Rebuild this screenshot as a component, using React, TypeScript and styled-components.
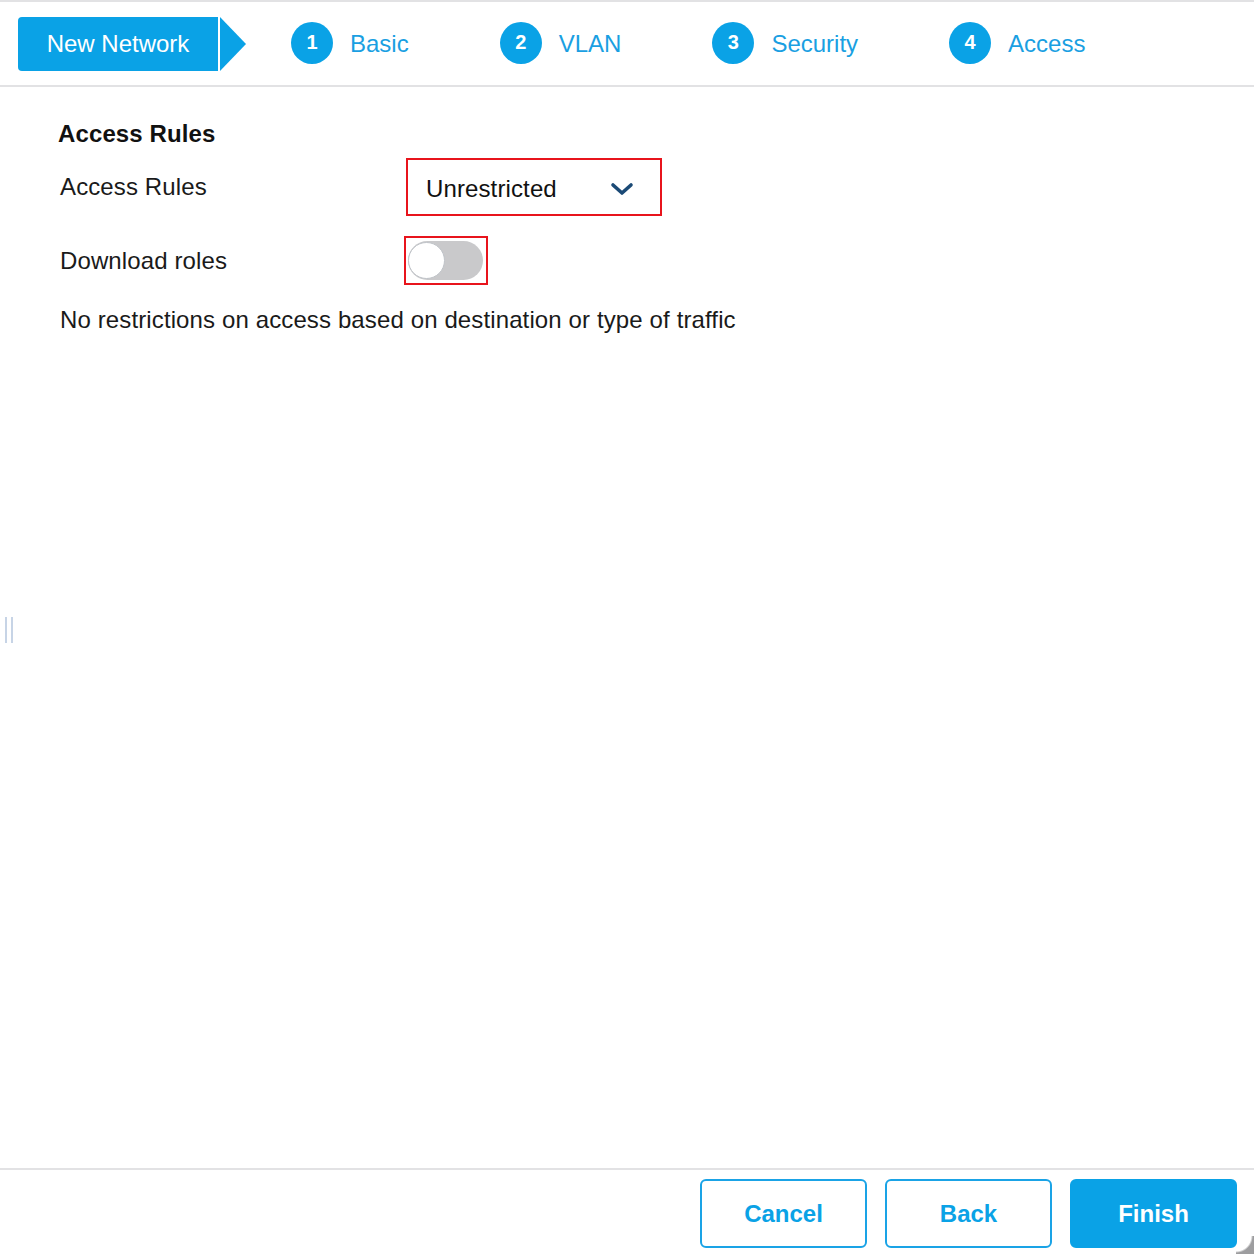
import styled, { createGlobalStyle } from 'styled-components';

const steps = [
	{ n: 1, label: 'Basic' },
	{ n: 2, label: 'VLAN' },
	{ n: 3, label: 'Security' },
	{ n: 4, label: 'Access' },
];

export default function App() {
	return (
		<>
			<GlobalStyle />
			<Page>
				<Header>
					<TitleTab>New Network</TitleTab>
					<TabArrow />
					<Steps>
						{steps.map((s) => (
							<Step key={s.n}>
								<StepCircle>{s.n}</StepCircle>
								<StepLabel>{s.label}</StepLabel>
							</Step>
						))}
					</Steps>
				</Header>

				<Content>
					<SectionTitle>Access Rules</SectionTitle>
					<FormRow $height={58}>
						<FieldLabel>Access Rules</FieldLabel>
						<Highlight>
							<Select>
								<span>Unrestricted</span>
								<svg width="24" height="16" viewBox="0 0 24 16">
									<path
										d="M3 4 L12 12 L21 4"
										fill="none"
										stroke="#1b4a76"
										strokeWidth="3.6"
										strokeLinecap="round"
										strokeLinejoin="round"
									/>
								</svg>
							</Select>
						</Highlight>
					</FormRow>
					<FormRow $height={49} $top={20}>
						<FieldLabel>Download roles</FieldLabel>
						<ToggleBox>
							<Toggle>
								<Knob />
							</Toggle>
						</ToggleBox>
					</FormRow>
					<Description>No restrictions on access based on destination or type of traffic</Description>
					<DragHandle />
				</Content>

				<Footer>
					<OutlineButton>Cancel</OutlineButton>
					<OutlineButton>Back</OutlineButton>
					<PrimaryButton>Finish</PrimaryButton>
				</Footer>
				<Corner />
			</Page>
		</>
	);
}

const GlobalStyle = createGlobalStyle`
	body {
		margin: 0;
		background: #ffffff;
		font-family: "Liberation Sans", Arial, sans-serif;
	}
`;

const Page = styled.div`
	position: relative;
	width: 1254px;
	height: 1254px;
	display: flex;
	flex-direction: column;
	background: #ffffff;
	border-top: 2px solid #e2e2e4;
	box-sizing: border-box;
	overflow: hidden;
`;

const Header = styled.div`
	height: 83px;
	flex-shrink: 0;
	display: flex;
	align-items: center;
	padding-left: 18px;
	border-bottom: 2px solid #e2e2e4;
`;

const TitleTab = styled.div`
	width: 200px;
	height: 54px;
	display: flex;
	align-items: center;
	justify-content: center;
	background: #0aa2e6;
	border-radius: 4px 0 0 4px;
	color: #ffffff;
	font-size: 24px;
`;

const TabArrow = styled.div`
	width: 0;
	height: 0;
	margin-left: 2px;
	border-top: 27px solid transparent;
	border-bottom: 27px solid transparent;
	border-left: 26px solid #0aa2e6;
`;

const Steps = styled.div`
	display: flex;
	align-items: center;
	gap: 91px;
	margin-left: 45px;
`;

const Step = styled.div`
	display: flex;
	align-items: center;
	gap: 17px;
`;

const StepCircle = styled.div`
	width: 42px;
	height: 42px;
	margin-top: -2px;
	border-radius: 50%;
	background: #0aa2e6;
	color: #ffffff;
	font-weight: 700;
	font-size: 20px;
	display: flex;
	align-items: center;
	justify-content: center;
`;

const StepLabel = styled.span`
	color: #1a9fe2;
	font-size: 24px;
`;

const Content = styled.div`
	position: relative;
	flex: 1;
	padding: 33px 0 0 58px;
	color: #111111;
	letter-spacing: 0.12px;
`;

const SectionTitle = styled.div`
	font-size: 24px;
	font-weight: 700;
	line-height: 28px;
	margin-bottom: 10px;
`;

const FormRow = styled.div<{ $height: number; $top?: number }>`
	display: flex;
	align-items: center;
	height: ${(p) => p.$height}px;
	margin-top: ${(p) => p.$top ?? 0}px;
`;

const FieldLabel = styled.div`
	width: 346px;
	padding-left: 2px;
	font-size: 24px;
	color: #1a1a1a;
`;

const Highlight = styled.div`
	border: 2px solid #e8141c;
	height: 54px;
	width: 252px;
	box-sizing: content-box;
`;

const Select = styled.div`
	height: 100%;
	display: flex;
	align-items: center;
	justify-content: space-between;
	padding: 3px 26px 0 18px;
	box-sizing: border-box;
	font-size: 24px;
	color: #111111;
`;

const ToggleBox = styled.div`
	margin-left: -2px;
	width: 78px;
	height: 45px;
	border: 2px solid #e8141c;
	display: flex;
	align-items: center;
	padding-left: 2px;
	box-sizing: content-box;
`;

const Toggle = styled.div`
	width: 75px;
	height: 39px;
	border-radius: 20px;
	background: #c9c9cb;
	display: flex;
	align-items: center;
`;

const Knob = styled.div`
	width: 35px;
	height: 35px;
	border-radius: 50%;
	background: #ffffff;
	border: 1px solid #bfc3c8;
`;

const Description = styled.div`
	margin-top: 21px;
	padding-left: 2px;
	font-size: 24px;
	line-height: 28px;
	color: #1a1a1a;
`;

const DragHandle = styled.div`
	position: absolute;
	left: 5px;
	top: 530px;
	width: 2px;
	height: 26px;
	background: #c7d4e6;
	box-shadow: 6px 0 0 #c7d4e6;
`;

const Footer = styled.div`
	flex-shrink: 0;
	height: 86px;
	border-top: 2px solid #e2e2e4;
	display: flex;
	justify-content: flex-end;
	align-items: flex-start;
	gap: 18px;
	padding: 9px 17px 0 0;
	box-sizing: border-box;
`;

const OutlineButton = styled.button`
	width: 167px;
	height: 69px;
	border: 2px solid #1aa3e6;
	border-radius: 6px;
	background: #ffffff;
	color: #0aa2e6;
	font-family: "Liberation Sans", Arial, sans-serif;
	font-size: 24px;
	font-weight: 700;
	cursor: pointer;
`;

const PrimaryButton = styled(OutlineButton)`
	background: #0aa2e6;
	border-color: #0aa2e6;
	color: #ffffff;
`;

const Corner = styled.div`
	position: absolute;
	right: 0;
	bottom: 0;
	width: 18px;
	height: 18px;
	background: radial-gradient(circle at top left, transparent 15px, #9d9d9f 17px);
`;
